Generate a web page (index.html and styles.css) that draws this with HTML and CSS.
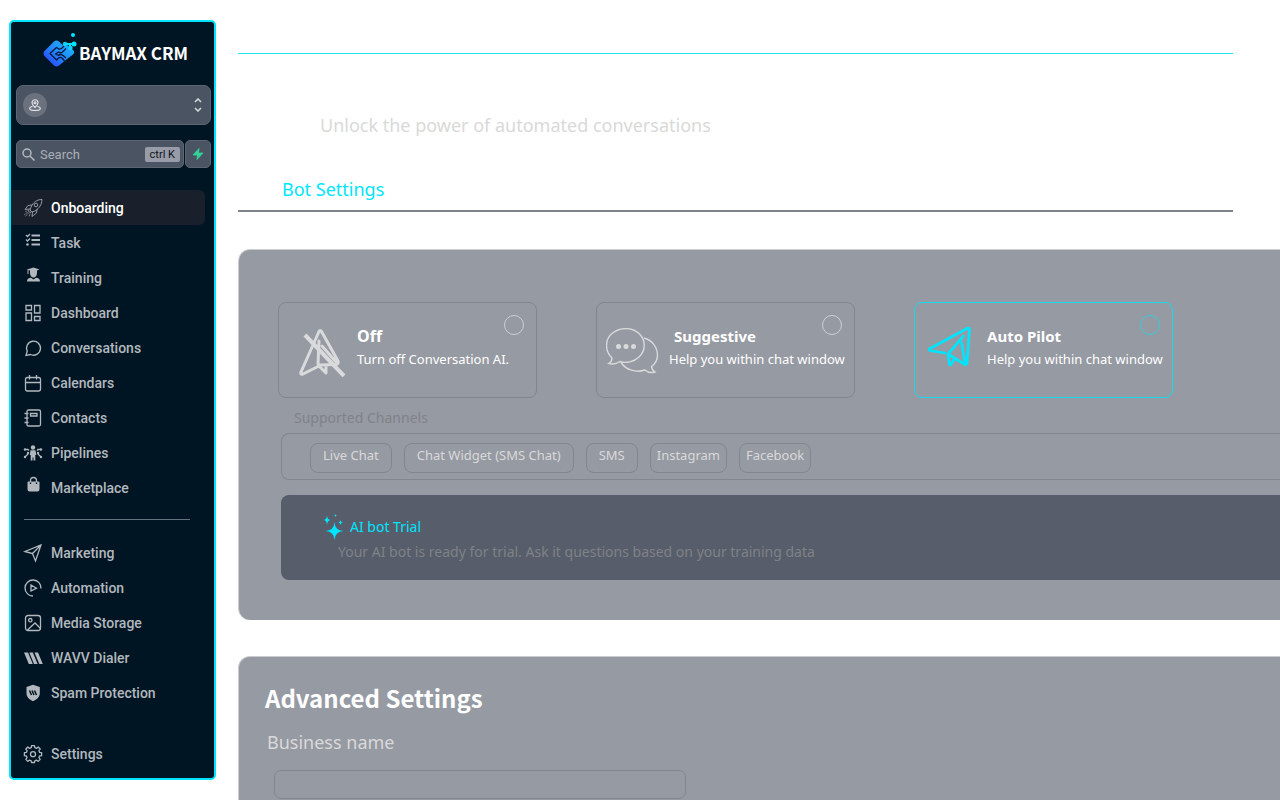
FILE: index.html
```html
<!DOCTYPE html>
<html lang="en">
<head>
    <meta charset="utf-8">
    <title>Baymax CRM - Bot Settings</title>
    <link rel="stylesheet" href="styles.css">
</head>
<body>
    <aside class="sidebar">
        <a href="#" class="logo">
            <svg width="34" height="36" viewBox="0 0 34 36">
                <defs>
                    <linearGradient id="logoFill" x1="0" y1="1" x2="1" y2="0">
                        <stop offset="0" stop-color="#2a35ff"/>
                        <stop offset="0.5" stop-color="#2388ff"/>
                        <stop offset="1" stop-color="#12c4ff"/>
                    </linearGradient>
                </defs>
                <path fill="url(#logoFill)" d="M11 9.500Q13.500 7.500 16 9.500L20 13.500L23 12L30.500 18.500Q32 20.500 30 22.500L24 27L16 33.500Q13.500 35.500 11 33.500L1.500 24Q-.5 21.500 1.500 19z"/>
                <path fill="none" stroke="#06183a" stroke-width="1.300" stroke-linejoin="round" d="M21 14L18.500 16.500Q16.500 18 14.500 16L13.500 15.500L7 21.500L13.500 28L15.500 26Q17.500 24.500 19.500 26.500L21.500 29"/>
                <path fill="none" stroke="#06183a" stroke-width="1.300" stroke-linejoin="round" d="M23 16.500L19.500 20Q17.500 21.500 15.500 20L12.500 22L15.500 23.500Q17.500 21.500 20 23.500L23 26"/>
                <path stroke="#00e0ff" stroke-width="2" d="M22 12h9M27 12v5"/>
                <circle cx="22" cy="12" r="2.200" fill="#0ed2ff"/>
                <circle cx="31" cy="12" r="2.500" fill="#00e5ff"/>
                <circle cx="27.500" cy="16" r="2.200" fill="#0ed2ff"/>
                <circle cx="30" cy="3" r="2" fill="#00e5ff"/>
            </svg>
            <span>BAYMAX CRM</span>
        </a>

        <button type="button" class="account" aria-label="Switch account">
            <span class="account-icon">
                <svg width="12" height="12" viewBox="0 0 12 12" fill="none" stroke="#e2e5e8" stroke-width="1.100">
                    <path d="M6 8.500C4 6.500 3 5.200 3 3.700a3 3 0 0 1 6 0C9 5.200 8 6.500 6 8.500z"/>
                    <circle cx="6" cy="3.800" r="1"/>
                    <path d="M3.500 7.500C1.500 7.800.7 8.500.7 9.500c0 1.200 2.300 2 5.300 2s5.300-.8 5.300-2c0-1-.8-1.700-2.800-2"/>
                </svg>
            </span>
            <svg width="8" height="14" viewBox="0 0 8 14" fill="none" stroke="#d2d5d9" stroke-width="1.600">
                <path d="M1 4l3-3 3 3M1 10l3 3 3-3"/>
            </svg>
        </button>

        <div class="search-row">
            <div class="search">
                <svg width="13" height="13" viewBox="0 0 13 13" fill="none" stroke="#b3b8bf" stroke-width="1.500">
                    <circle cx="5" cy="5" r="4"/>
                    <path d="M8 8l4.500 4.500"/>
                </svg>
                <input type="text" placeholder="Search" aria-label="Search">
                <kbd>ctrl K</kbd>
            </div>
            <button type="button" class="quick" aria-label="Quick actions">
                <svg width="12" height="12" viewBox="0 0 12 12" fill="#34d399" stroke="#34d399" stroke-width=".8" stroke-linejoin="round"><path d="M7 .5L1 7h4.500L5 11.500 11 5H6.500z"/></svg>
            </button>
        </div>

        <nav class="menu">
            <a href="#" class="active">
                <svg viewBox="0 0 18 18" class="rocket">
                    <path d="M18 .5c-5 0-8.500 2.500-11 7.500L6 11l2 2 3-1c4.500-3 6.800-6.500 7-11.500zM8 6L4 6.500 1 10.500l5-.5M13 10l-.5 4L8 17.500l.5-4.500"/>
                    <circle cx="12" cy="6" r="1.800"/>
                    <path stroke-dasharray="1.500 1" d="M5 11l-4 2M5.500 12L0 16M6 12.500L1 18M6.500 13L5 18"/>
                </svg>
                Onboarding
            </a>
            <a href="#">
                <svg viewBox="0 0 18 18">
                    <path stroke-width="2" d="M7.500 1.500H16M7.500 6H16M7.500 10.500H16"/>
                    <path d="M2 1l1.500 1.500L6 0M2 5.500L3.500 7 6 4.500"/>
                    <circle class="solid" cx="3.500" cy="10.500" r="1.300"/>
                </svg>
                Task
            </a>
            <a href="#">
                <svg viewBox="0 0 18 18" class="filled">
                    <path d="M3 .5L9.500-1.500 15.500.5 13 1.400V4c0 2.500-1.500 4.500-3.500 4.500S6 6.500 6 4V1.500l-1.500-.4V5h-1V1z"/>
                    <path d="M3 12.500c0-2.500 1.500-3.500 4-3.700L9.500 10.500l2.500-1.700c2.500.2 4 1.200 4 3.700z"/>
                </svg>
                Training
            </a>
            <a href="#">
                <svg viewBox="0 0 18 18"><path d="M2 1.500h5.500V6H2zM2 9h5.500v7.500H2zM10.500 1.500H16V9h-5.500zM10.500 12.500H16v4h-5.500z"/></svg>
                Dashboard
            </a>
            <a href="#">
                <svg viewBox="0 0 18 18"><path d="M2 16.500l1.200-4.300A7 7 0 1 1 6.500 15.500z"/></svg>
                Conversations
            </a>
            <a href="#">
                <svg viewBox="0 0 18 18"><path d="M3.500 3.500h11Q16.500 3.500 16.500 5.500v9.500Q16.500 17 14.500 17h-11Q1.500 17 1.500 15V5.500Q1.500 3.500 3.500 3.500zM1.500 8.500h15M5.500 1v4.500M12.500 1v4.500"/></svg>
                Calendars
            </a>
            <a href="#">
                <svg viewBox="0 0 18 18"><path d="M4.500 1H15Q16.500 1 16.500 2.500v13Q16.500 17 15 17H4.500Q3 17 3 15.500V2.500Q3 1 4.500 1zM6.500 4.500h6.500v2.500H6.500zM.5 4.500h4M.5 9h4M.5 13.500h4"/></svg>
                Contacts
            </a>
            <a href="#">
                <svg viewBox="0 0 18 18" class="filled">
                    <circle cx="9" cy="3.500" r="2.200"/>
                    <path d="M6.500 6.300h5L12.300 11h-1v5.500H9.500v-3h-1v3H6.700V11h-1z"/>
                    <circle cx="1" cy="5.500" r="1.200"/><circle cx="1" cy="13" r="1.200"/><circle cx="4" cy="9" r="1.200"/>
                    <circle cx="17" cy="5.500" r="1.200"/><circle cx="17" cy="13" r="1.200"/><circle cx="14" cy="9" r="1.200"/>
                    <path class="line" d="M1 5.500h3l1 1M1 13l3-3M17 5.500h-3l-1 1M17 13l-3-3"/>
                </svg>
                Pipelines
            </a>
            <a href="#">
                <svg viewBox="0 0 18 18" class="filled">
                    <path d="M4.500 2.500h10q1 0 1 1v6.500q0 2.500-2 2.500h-8q-2 0-2-2.500V3.500Q3.500 2.500 4.500 2.500z"/>
                    <path class="line" d="M6.500 3.500V1.500q0-3 3-3t3 3v2"/>
                    <path class="cut" d="M6.500 3.500V5M12.500 3.500V5"/>
                </svg>
                Marketplace
            </a>
        </nav>

        <hr>

        <nav class="menu">
            <a href="#">
                <svg viewBox="0 0 18 18"><path d="M1 7.500L17 1l-5.500 16-3-7.500zM17 1L8.500 9.500"/></svg>
                Marketing
            </a>
            <a href="#">
                <svg viewBox="0 0 18 18"><path d="M9 17A8 8 0 1 1 17 9.500M7 6l5.500 3.200L7 12z"/></svg>
                Automation
            </a>
            <a href="#">
                <svg viewBox="0 0 18 18">
                    <rect x="1.500" y="1.500" width="15" height="15" rx="2.500"/>
                    <circle cx="6.300" cy="6.200" r="1.700"/>
                    <path d="M3.500 16l7.500-7 5.500 5.500"/>
                </svg>
                Media Storage
            </a>
            <a href="#">
                <svg viewBox="0 0 18 18" class="filled"><path d="M0 3.500h4l4.800 11.500h-4zM5.300 3.500h3.500L13.600 15H10zM10.500 3.500H14L18.800 15h-3.500z"/></svg>
                WAVV Dialer
            </a>
            <a href="#">
                <svg viewBox="0 0 18 18" class="filled">
                    <path d="M9 .8L15.800 3v6c0 4-3 6.500-6.800 8.200C5.200 15.500 2.500 13 2.500 9V3z"/>
                    <path class="cut" stroke-width="1.500" d="M5.500 6.500l2 4.500M8 6.500l2 4.500M10.500 6.500l2 4.500"/>
                </svg>
                Spam Protection
            </a>
        </nav>

        <nav class="menu menu-bottom">
            <a href="#">
                <svg viewBox="0 0 18 18">
                    <path stroke-linejoin="round" d="M7.300 2.700L7.500.7h3l.3 2 1.700.7L14.200 2l2 2-1.300 1.700.7 1.700 2 .3v3l-2 .3-.7 1.700 1.300 1.700-2 2-1.700-1.300-1.700.7-.3 1.700h-3l-.3-1.700-1.700-.7L3.800 16.400l-2-2 1.300-1.700-.7-1.700-2-.3v-3l2-.3.7-1.700L1.800 4l2-2 1.700 1.400z"/>
                    <circle cx="9" cy="9.200" r="2.500"/>
                </svg>
                Settings
            </a>
        </nav>
    </aside>

    <main class="content">
        <header class="page-head">
            <p class="subtitle">Unlock the power of automated conversations</p>
            <nav class="tabs"><a href="#">Bot Settings</a></nav>
        </header>

        <section class="panel">
            <div class="modes">
                <label class="mode mode-off">
                    <svg width="47" height="48" viewBox="0 0 47 48" fill="none" stroke="#d8dadb" stroke-width="3" stroke-linejoin="round" stroke-linecap="round">
                        <path d="M20 2.500L2 43q-1 3 2 2l16-8M20 2.500q1-2 2.500 0L39 32q1 3-2 3.500L20 36M20 12l-1 23M23 17l15 17M20 37l7 7V37"/>
                        <path stroke-width="4" stroke-linecap="butt" d="M6 6l39 41"/>
                    </svg>
                    <strong>Off</strong>
                    <input type="radio" name="mode">
                    <span class="mode-text">Turn off Conversation AI.</span>
                </label>
                <label class="mode mode-suggestive">
                    <svg width="53" height="46" viewBox="0 0 53 46" fill="none" stroke="#d8dadb" stroke-width="1.400">
                        <path d="M6 30C-1.500 23 -1 11 6 5.500C14-1 26-1 33 5.500c7 6.500 7 17 0 23.500c-5 5-13 6.500-19 4.500c-3 2-7 3-11 2c2-1 3-3 3-5.500z"/>
                        <path d="M38 10c8 2 13.500 9 13.500 17.500c0 5-2 8-6 11c0 2 1.500 4 3.500 5.500c-4 1-8 0-10-2c-9 3-19 0-24-7.500"/>
                        <g fill="#d8dadb" stroke="none"><circle cx="12.500" cy="18.500" r="2.500"/><circle cx="20" cy="18.500" r="2.500"/><circle cx="27.500" cy="18.500" r="2.500"/></g>
                    </svg>
                    <strong>Suggestive</strong>
                    <input type="radio" name="mode">
                    <span class="mode-text">Help you within chat window</span>
                </label>
                <label class="mode mode-auto">
                    <svg width="43" height="41" viewBox="0 0 43 41" fill="none" stroke="#00e5ff" stroke-width="2.700" stroke-linejoin="round" stroke-linecap="round">
                        <path d="M17 27L1.500 24.500Q.5 23.500 2 22.500L40 2q1.500-.5 1.500 1L39 37q-.5 2-2 1.500L20 28L35.500 10M33.500 16.500L37 37M20 28l1.500 10.500q.5 1 1.500 0l3-5"/>
                    </svg>
                    <strong>Auto Pilot</strong>
                    <input type="radio" name="mode" checked>
                    <span class="mode-text">Help you within chat window</span>
                </label>
            </div>

            <h3 class="channels-title">Supported Channels</h3>
            <div class="channels">
                <span>Live Chat</span>
                <span>Chat Widget (SMS Chat)</span>
                <span>SMS</span>
                <span class="tight">Instagram</span>
                <span class="tight">Facebook</span>
            </div>

            <div class="trial">
                <h3>
                    <svg width="20" height="26" viewBox="0 0 20 26" fill="#00e5ff">
                        <path d="M10.500 8q.5 8.500 9 9-8.500.5-9 9-.5-8.500-9-9 8.500-.5 9-9zM3 1.500q.4 4 3.500 4.500Q3.400 6.500 3 11 2.600 6.500-.5 6 2.600 5.500 3 1.500zM16.500 6q.3 2.200 2.200 2.500-1.900.3-2.200 2.500-.3-2.200-2.200-2.500 1.900-.3 2.200-2.500zM11.500 0q.2 1.300 1.300 1.500-1.100.2-1.300 1.500-.2-1.300-1.300-1.500 1.100-.2 1.300-1.500z"/>
                    </svg>
                    AI bot Trial
                </h3>
                <p>Your AI bot is ready for trial. Ask it questions based on your training data</p>
            </div>
        </section>

        <section class="panel panel-advanced">
            <h2>Advanced Settings</h2>
            <label for="businessName">Business name</label>
            <input type="text" id="businessName">
        </section>
    </main>
</body>
</html>
```
FILE: styles.css
```css
* {
    box-sizing: border-box;
}
body {
    display: flex;
    min-height: 100vh;
    margin: 0;
    background-color: #fff;
    font-family: "Noto Sans", sans-serif;
}
a {
    text-decoration: none;
}
svg {
    flex: none;
}

/* Sidebar */
.sidebar {
    flex: none;
    display: flex;
    flex-direction: column;
    width: 207px;
    min-height: calc(100vh - 40px);
    margin: 20px 0 20px 9px;
    border: 2px solid #00e5ff;
    border-radius: 5px;
    background-color: #001524;
    font-family: Roboto, sans-serif;
}
.logo {
    display: flex;
    align-items: center;
    gap: 2px;
    height: 63px;
    padding: 0 0 8px 32px;
    color: #fff;
    font-family: "Noto Sans CJK SC", sans-serif;
    font-size: 17px;
    font-weight: bold;
    white-space: nowrap;
}
.logo span {
    padding-top: 6px;
}
.account {
    display: flex;
    align-items: center;
    justify-content: space-between;
    height: 40px;
    margin: 0 3px 0 5px;
    padding: 0 8px 0 6px;
    border: 1px solid #5d6572;
    border-radius: 7px;
    background-color: #4b5462;
}
.account-icon {
    display: flex;
    align-items: center;
    justify-content: center;
    width: 24px;
    height: 24px;
    border-radius: 50%;
    background-color: #6b727e;
}
.search-row {
    display: flex;
    gap: 1px;
    margin: 15px 3px 22px 5px;
}
.search {
    flex: 1;
    display: flex;
    align-items: center;
    gap: 5px;
    min-width: 0;
    height: 28px;
    padding: 0 3px 0 5px;
    border: 1px solid #5d6572;
    border-radius: 5px;
    background-color: #4b5462;
}
.search input {
    flex: 1;
    min-width: 0;
    padding: 0;
    border: none;
    outline: none;
    background: none;
    color: #fff;
    font-family: inherit;
    font-size: 13px;
}
.search input::placeholder {
    color: #a9afb7;
}
.search kbd {
    padding: 0 5px;
    border-radius: 2px;
    background-color: #979ca8;
    color: #10141d;
    font-family: inherit;
    font-size: 11px;
    line-height: 15px;
}
.quick {
    display: flex;
    align-items: center;
    justify-content: center;
    width: 26px;
    padding: 0;
    border: 1px solid #5d6572;
    border-radius: 5px;
    background-color: #4b5462;
}
.menu a {
    display: flex;
    align-items: center;
    gap: 9px;
    height: 35px;
    margin-right: 9px;
    padding-left: 13px;
    border-radius: 0 6px 6px 0;
    color: #b2b8bd;
    font-size: 14px;
    font-weight: 500;
}
.menu a.active {
    background-color: #191f2b;
    color: #fff;
}
.menu svg {
    width: 18px;
    height: 18px;
    overflow: visible;
    fill: none;
    stroke: #b2b8bd;
    stroke-width: 1.3px;
}
.menu svg.rocket {
    stroke-width: 0.8px;
}
.menu svg.filled,
.menu .solid {
    fill: #b2b8bd;
    stroke: none;
}
.menu .line {
    fill: none;
    stroke: #b2b8bd;
}
.menu .cut {
    fill: none;
    stroke: #001524;
}
.sidebar hr {
    width: 166px;
    margin: 14px 0 15px 13px;
    border: none;
    border-top: 1px solid #66727b;
}
.menu-bottom {
    margin-top: auto;
    margin-bottom: 7px;
}

/* Page content */
.content {
    flex: 1;
    display: flex;
    flex-direction: column;
    min-width: 0;
    padding: 53px 0 0 22px;
}
.page-head {
    margin-right: 47px;
    border-top: 1px solid #1fe3f7;
}
.subtitle {
    margin: 59px 0 40px 82px;
    color: #d9d9d9;
    font-size: 18px;
    line-height: 24px;
}
.tabs {
    padding: 0 0 9px 44px;
    border-bottom: 2px solid #80838a;
    font-size: 18px;
    line-height: 24px;
}
.tabs a {
    color: #00e5ff;
}
.panel {
    margin-top: 37px;
    padding: 52px 0 40px 42px;
    border: 1px solid #cbcdd1;
    border-width: 1px 0 0 1px;
    border-radius: 12px 0 0 12px;
    background-color: #969aa3;
}

/* Bot modes */
.modes {
    display: grid;
    grid-template-columns: repeat(3, 1fr);
    gap: 59px;
    margin: 0 107px 0 -3px;
}
.mode {
    display: grid;
    grid-template-columns: 72px 1fr 20px;
    grid-template-rows: 32px 26px;
    padding: 12px 12px 24px 0;
    border: 1px solid #82868e;
    border-radius: 8px;
    color: #fff;
    cursor: pointer;
}
.mode svg {
    grid-row: 1 / 3;
    align-self: end;
    margin-left: 9px;
}
.mode strong {
    align-self: end;
    font-size: 15px;
    line-height: 22px;
}
.mode input {
    appearance: none;
    width: 20px;
    height: 20px;
    margin: 0;
    border: 1px solid #cdd0d3;
    border-radius: 50%;
}
.mode-text {
    grid-column: 2 / 4;
    font-size: 13px;
    line-height: 24px;
    white-space: nowrap;
}
.mode-off {
    grid-template-columns: 78px 1fr 20px;
}
.mode-off svg {
    margin: 0 0 -4px 20px;
}
.mode-off strong {
    font-size: 16px;
}
.mode-suggestive svg {
    margin-bottom: -1px;
}
.mode-suggestive strong {
    padding-left: 5px;
}
.mode-auto {
    border-color: #18d8ee;
}
.mode-auto svg {
    margin: 0 0 6px 13px;
}
.mode-auto input {
    border-color: #38cbdc;
}

/* Channels */
.channels-title {
    margin: 10px 0 5px 13px;
    color: #7f8289;
    font-size: 14px;
    font-weight: normal;
    line-height: 20px;
}
.channels {
    display: flex;
    gap: 12px;
    padding: 9px 0 6px 28px;
    border: 1px solid #82868e;
    border-right: none;
    border-radius: 8px 0 0 8px;
}
.channels span {
    padding: 0 12px 5px;
    border: 1px solid #82868e;
    border-radius: 8px;
    color: #d9d9d9;
    font-size: 13px;
    line-height: 23px;
}
.channels .tight {
    padding-left: 6px;
    padding-right: 6px;
}
.trial {
    margin-top: 15px;
    padding: 18px 0 16px 43px;
    border-radius: 8px 0 0 8px;
    background-color: #575d6a;
}
.trial h3 {
    display: flex;
    align-items: center;
    gap: 6px;
    margin: 0;
    color: #00e5ff;
    font-size: 14px;
    font-weight: normal;
    line-height: 27px;
}
.trial p {
    margin: 0 0 0 14px;
    color: #7f8287;
    font-size: 14px;
    line-height: 24px;
}

/* Advanced settings */
.panel-advanced {
    flex: 1;
    display: flex;
    flex-direction: column;
    margin-top: 36px;
    padding: 23px 0 0 26px;
    border-bottom-left-radius: 0;
}
.panel-advanced h2 {
    margin: 0;
    color: #fff;
    font-family: "Noto Sans CJK SC", sans-serif;
    font-size: 24px;
    line-height: 36px;
}
.panel-advanced label {
    margin: 14px 0 16px 2px;
    color: #d9d9d9;
    font-size: 18px;
    line-height: 24px;
}
.panel-advanced input {
    width: 41%;
    max-width: 412px;
    height: 29px;
    margin-left: 9px;
    padding: 0 10px;
    border: 1px solid #82868e;
    border-radius: 7px;
    background: none;
    color: #fff;
    font-size: 14px;
}
```
